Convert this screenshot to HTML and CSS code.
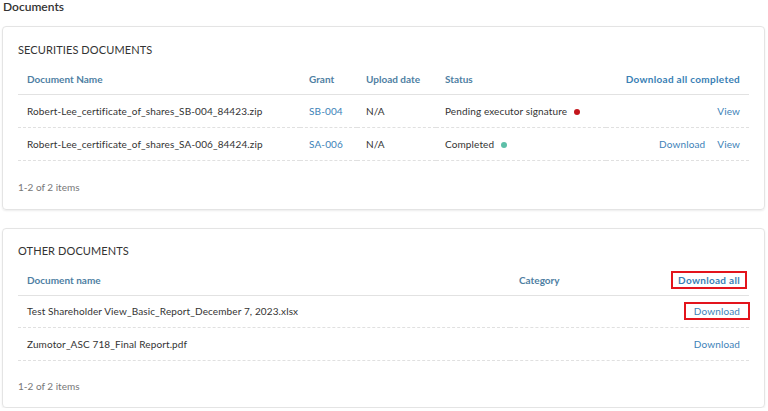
FILE: index.html
```html
<!DOCTYPE html>
<html>
<head>
<meta charset="utf-8">
<link rel="stylesheet" href="styles.css">
</head>
<body>
<div class="page">
  <h1 class="page-title">Documents</h1>

  <section class="card">
    <h2 class="card-title">SECURITIES DOCUMENTS</h2>
    <table class="doc-table">
      <colgroup>
        <col class="c-name1"><col class="c-grant"><col class="c-date"><col class="c-status"><col>
      </colgroup>
      <thead>
        <tr>
          <th>Document Name</th>
          <th>Grant</th>
          <th>Upload date</th>
          <th>Status</th>
          <th class="right link-head">Download all completed</th>
        </tr>
      </thead>
      <tbody>
        <tr>
          <td>Robert-Lee_certificate_of_shares_SB-004_84423.zip</td>
          <td><a class="link">SB-004</a></td>
          <td>N/A</td>
          <td>Pending executor signature <span class="dot dot-red"></span></td>
          <td class="right"><a class="link">View</a></td>
        </tr>
        <tr>
          <td>Robert-Lee_certificate_of_shares_SA-006_84424.zip</td>
          <td><a class="link">SA-006</a></td>
          <td>N/A</td>
          <td>Completed <span class="dot dot-teal"></span></td>
          <td class="right"><a class="link">Download</a><a class="link gap">View</a></td>
        </tr>
      </tbody>
    </table>
    <div class="footer">1-2 of 2 items</div>
  </section>

  <section class="card card-2">
    <h2 class="card-title">OTHER DOCUMENTS</h2>
    <table class="doc-table">
      <colgroup>
        <col class="c-name2"><col class="c-cat"><col>
      </colgroup>
      <thead>
        <tr>
          <th>Document name</th>
          <th>Category</th>
          <th class="right link-head"><span class="mark mark-a">Download all</span></th>
        </tr>
      </thead>
      <tbody>
        <tr>
          <td>Test Shareholder View_Basic_Report_December 7, 2023.xlsx</td>
          <td></td>
          <td class="right"><a class="link mark mark-b">Download</a></td>
        </tr>
        <tr>
          <td>Zumotor_ASC 718_Final Report.pdf</td>
          <td></td>
          <td class="right"><a class="link">Download</a></td>
        </tr>
      </tbody>
    </table>
    <div class="footer">1-2 of 2 items</div>
  </section>
</div>
</body>
</html>
```

FILE: styles.css
```css
* { box-sizing: border-box; }
html, body { margin: 0; padding: 0; background: #ffffff; }
body {
  font-family: Lato, "Open Sans", "Liberation Sans", sans-serif;
  color: #333333;
  font-size: 10px;
}
.page { padding: 0 3px 0 2px; width: 768px; }
.page-title {
  margin: 0 0 0 1px;
  font-size: 12px;
  line-height: 14px;
  font-weight: 600;
  color: #333;
  height: 26px;
  padding-top: 0;
}
.card {
  width: 763px;
  border: 1px solid #e4e4e4;
  border-radius: 4px;
  box-shadow: 0 1px 2px rgba(0,0,0,0.08);
  padding: 16px 15px 15px 15px;
  height: 184px;
}
.card-2 { margin-top: 18px; height: 180px; padding-top: 15px; }
.card-title {
  margin: 0;
  font-size: 11px;
  line-height: 14px;
  font-weight: 400;
  color: #333;
  letter-spacing: 0.1px;
}
.doc-table {
  width: 731px;
  margin-top: 7px;
  border-collapse: collapse;
  table-layout: fixed;
}
.card-2 .doc-table { margin-top: 8px; }
.c-name1 { width: 282px; }
.c-grant { width: 57px; }
.c-date { width: 79px; }
.c-status { width: 170px; }
.c-name2 { width: 492px; }
.c-cat { width: 120px; }
th {
  height: 30px;
  text-align: left;
  font-weight: 700;
  color: #4f7fa3;
  padding: 0 9px;
  border-bottom: 1px solid #e2e2e2;
  white-space: nowrap;
}
.card-2 th { height: 29px; }
th.link-head { color: #3a7fb5; letter-spacing: 0.3px; }
td {
  height: 33px;
  padding: 0 9px;
  border-bottom: 1px dashed #e0e0e0;
  white-space: nowrap;
  color: #333;
  letter-spacing: 0.12px;
}
.card-2 tbody tr:first-child td { height: 32px; }
.right { text-align: right; }
.link { color: #3d82b8; text-decoration: none; }
.gap { margin-left: 12px; }
.dot {
  display: inline-block;
  width: 6px; height: 6px;
  border-radius: 50%;
  margin-left: 4px;
  vertical-align: 0px;
}
.dot-red { background: #c4161c; }
.dot-teal { background: #5dbfa8; }
.footer {
  margin-top: 19px;
  line-height: 14px;
  color: #777;
}
.card-2 .footer { margin-top: 18px; }
.mark {
  display: inline-block;
  border: 2px solid #e3141c;
  line-height: 12px;
  padding: 1px 5px;
}
.mark-a { margin: -3px -7px -3px 0; }
.mark-b { margin: -3px -10px -3px 0; padding: 1px 8px; }
```
